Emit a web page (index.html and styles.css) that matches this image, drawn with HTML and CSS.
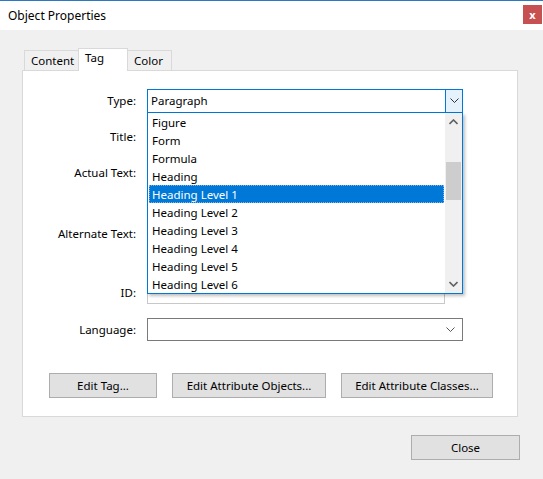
FILE: index.html
```html
<!DOCTYPE html>
<html lang="en">
<head>
  <meta charset="UTF-8"/>
  <title>Object Properties</title>
  <link rel="stylesheet" href="styles.css">
</head>
<body>
  <div class="titlebar">
    <span class="title">Object Properties</span>
    <button class="close-x">x</button>
  </div>

  <div class="dialog">
    <div class="tabs">
      <div class="tab t-content">Content</div>
      <div class="tab t-tag active">Tag</div>
      <div class="tab t-color">Color</div>
    </div>

    <div class="panel">
      <!-- TYPE -->
      <div class="row row-type">
        <label>Type:</label>
        <div class="combo focused">
          <span class="value">Paragraph</span>
          <span class="drop">
            <svg width="9" height="6" viewBox="0 0 9 6"><path d="M0.5 0.5 L4.5 4.5 L8.5 0.5" fill="none" stroke="#333" stroke-width="1"/></svg>
          </span>
        </div>

        <div class="listbox">
          <ul class="items">
            <li>Figure</li>
            <li>Form</li>
            <li>Formula</li>
            <li>Heading</li>
            <li class="selected">Heading Level 1</li>
            <li>Heading Level 2</li>
            <li>Heading Level 3</li>
            <li>Heading Level 4</li>
            <li>Heading Level 5</li>
            <li>Heading Level 6</li>
          </ul>
          <div class="scrollbar">
            <span class="arrow">
              <svg width="9" height="6" viewBox="0 0 9 6"><path d="M0.5 5 L4.5 1 L8.5 5" fill="none" stroke="#606060" stroke-width="1.6"/></svg>
            </span>
            <span class="track"><span class="thumb"></span></span>
            <span class="arrow">
              <svg width="9" height="6" viewBox="0 0 9 6"><path d="M0.5 1 L4.5 5 L8.5 1" fill="none" stroke="#606060" stroke-width="1.6"/></svg>
            </span>
          </div>
        </div>
      </div>

      <!-- TITLE / TEXT FIELDS -->
      <div class="row row-title">
        <label>Title:</label>
        <div class="field"></div>
      </div>
      <div class="row row-actual">
        <label>Actual Text:</label>
        <div class="field area"></div>
      </div>
      <div class="row row-alt">
        <label>Alternate Text:</label>
        <div class="field area"></div>
      </div>
      <div class="row row-id">
        <label>ID:</label>
        <div class="field"></div>
      </div>

      <!-- LANGUAGE -->
      <div class="row row-lang">
        <label>Language:</label>
        <div class="combo">
          <span class="value"></span>
          <span class="drop plain">
            <svg width="9" height="6" viewBox="0 0 9 6"><path d="M0.5 0.5 L4.5 4.5 L8.5 0.5" fill="none" stroke="#555" stroke-width="1"/></svg>
          </span>
        </div>
      </div>

      <div class="actions">
        <button class="btn w-tag">Edit Tag...</button>
        <button class="btn w-obj">Edit Attribute Objects...</button>
        <button class="btn w-cls">Edit Attribute Classes...</button>
      </div>
    </div>

    <div class="footer">
      <button class="btn w-close">Close</button>
    </div>
  </div>
</body>
</html>
```

FILE: styles.css
```css
body { margin:0; background:#f0f0f0; font-family:"Noto Sans", sans-serif; font-size:11.5px; color:#000; }

.titlebar {
  height:29px; background:#fff;
  border-top:1px solid #2b79c2;
  display:flex; align-items:center; justify-content:space-between;
  font-size:12px;
}
.titlebar .title { padding-left:8px; margin-top:-1px; }
.close-x {
  width:19px; height:19px; margin-right:1px; margin-top:-2px;
  background:#c75050; color:#fff; border:none; padding:0;
  font:bold 11px "Noto Sans", sans-serif; line-height:17px;
}

.dialog { padding:18px 0 0 22px; }

.tabs { display:flex; align-items:flex-end; padding-left:2px; height:22px; }
.tab {
  box-sizing:border-box;
  height:20px; line-height:20px; padding:0 6px;
  border:1px solid #d9d9d9; border-bottom:none; background:#f0f0f0;
}
.t-content { width:54px; border-right:none; }
.t-tag { width:50px; }
.t-color { width:44px; border-left:none; }
.tab.active {
  height:23px; line-height:18px; padding-left:6px;
  background:#fff; position:relative; z-index:1; margin-bottom:-1px;
}

.panel {
  width:494px; height:345px;
  background:#fff; border:1px solid #d9d9d9;
  position:relative;
}

.row { display:flex; align-items:flex-start; }
.row label { width:113px; text-align:right; line-height:23px; margin-right:11px; flex-shrink:0; }

.row-type   { margin-top:18px; position:relative; }
.row-title  { margin-top:12px; }
.row-actual { margin-top:13px; }
.row-alt    { margin-top:9px; }
.row-id     { margin-top:7px; }
.row-lang   { margin-top:14px; }

.combo {
  width:314px; height:21px;
  border:1px solid #7a7a7a; background:#fff;
  display:flex; align-items:stretch;
}
.combo .value { flex:1; padding-left:3px; line-height:21px; }
.combo .drop { width:16px; display:flex; align-items:center; justify-content:center; }
.combo .drop.plain { width:24px; }
.combo.focused { height:22px; border-color:#0078d7; }
.combo.focused .value { line-height:22px; }
.combo.focused .drop { background:#e5f1fb; border-left:1px solid #0078d7; }

.field { width:296px; height:21px; border:1px solid #c8c8c8; background:#fff; }
.field.area { height:50px; }

/* open dropdown over the fields */
.listbox {
  position:absolute; left:124px; top:24px;
  width:314px; height:180px;
  border:1px solid #0078d7; border-top:none; background:#fff;
  display:flex;
  box-shadow:2px 2px 3px rgba(0,0,0,0.25);
  z-index:5;
}
.items { list-style:none; margin:0; padding:0 1px; flex:1; }
.items li { height:18px; line-height:19px; padding-left:3px; }
.items li.selected {
  background:#0078d7; color:#fff;
  outline:1px dotted #7fb3e6; outline-offset:-1px;
}
.scrollbar { width:17px; background:#f0f0f0; display:flex; flex-direction:column; }
.scrollbar .arrow { height:18px; display:flex; align-items:center; justify-content:center; }
.scrollbar .track { flex:1; position:relative; }
.scrollbar .thumb { position:absolute; left:1px; right:1px; top:31px; height:38px; background:#cdcdcd; }

.actions { display:flex; gap:15px; margin:32px 0 0 26px; }

.btn {
  height:25px; padding:0;
  background:#e1e1e1; border:1px solid #adadad;
  font:11.5px "Noto Sans", sans-serif; color:#000;
}
.w-tag { width:108px; }
.w-obj { width:154px; }
.w-cls { width:152px; }

.footer { margin:18px 0 0 389px; }
.w-close { width:109px; }
```
